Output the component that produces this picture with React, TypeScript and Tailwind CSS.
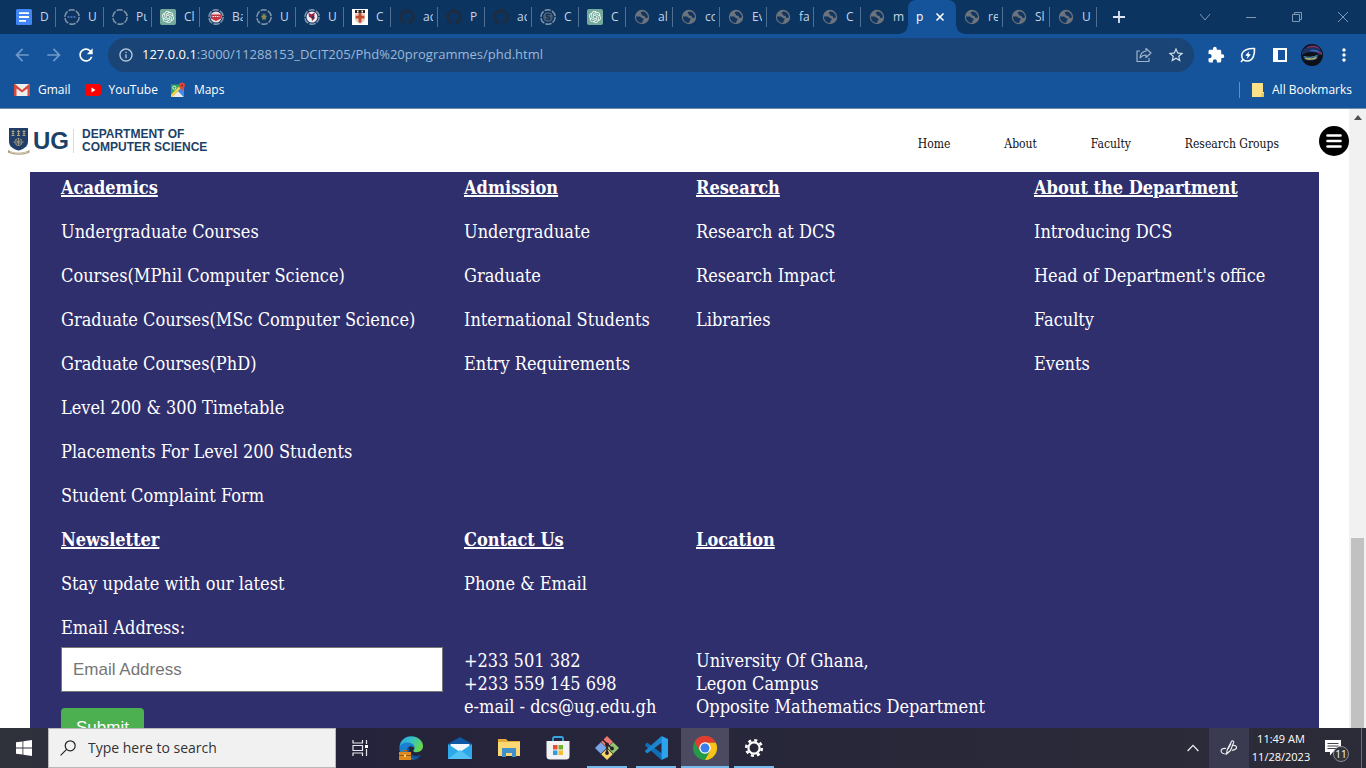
import React from "react";
import { FaGithub } from "react-icons/fa";
import { SiOpenai } from "react-icons/si";
import {
  MdArrowBack,
  MdArrowForward,
  MdExtension,
  MdInfoOutline,
  MdMoreVert,
  MdRefresh,
  MdStarBorder,
} from "react-icons/md";

const UI_FONT = "font-['Open_Sans','Noto_Sans',sans-serif]";
const PAGE_FONT = "font-['DejaVu_Serif_Condensed','DejaVu_Serif',serif]";

type TabIcon = "docs" | "ringDots" | "ring" | "ai" | "ringRed" | "ringGold" | "ringBird" | "crest" | "github" | "ringS" | "globe";

const TABS: { icon: TabIcon; label: string }[] = [
  { icon: "docs", label: "D" },
  { icon: "ringDots", label: "U" },
  { icon: "ring", label: "Pu" },
  { icon: "ai", label: "Cl" },
  { icon: "ringRed", label: "Ba" },
  { icon: "ringGold", label: "U" },
  { icon: "ringBird", label: "U" },
  { icon: "crest", label: "C" },
  { icon: "github", label: "ac" },
  { icon: "github", label: "P" },
  { icon: "github", label: "ac" },
  { icon: "ringS", label: "C" },
  { icon: "ai", label: "C" },
  { icon: "globe", label: "al" },
  { icon: "globe", label: "co" },
  { icon: "globe", label: "Ev" },
  { icon: "globe", label: "fa" },
  { icon: "globe", label: "C" },
  { icon: "globe", label: "m" },
];

const TABS_AFTER: { icon: TabIcon; label: string }[] = [
  { icon: "globe", label: "re" },
  { icon: "globe", label: "Sl" },
  { icon: "globe", label: "U" },
];

function Ring({ children }: { children?: React.ReactNode }) {
  return (
    <svg viewBox="0 0 16 16" className="size-4 shrink-0">
      <circle cx="8" cy="8" r="7.2" fill="none" stroke="#8195ab" strokeWidth="1.5" strokeDasharray="6.3 1.24" />
      {children}
    </svg>
  );
}

function Favicon({ icon }: { icon: TabIcon }) {
  switch (icon) {
    case "docs":
      return (
        <svg viewBox="0 0 16 16" className="size-4 shrink-0">
          <rect width="16" height="16" rx="1.5" fill="#4285f4" />
          <path d="M3 4.2h10M3 8h10M3 11.8h7" stroke="#fff" strokeWidth="1.8" />
        </svg>
      );
    case "ai":
      return (
        <span className="flex size-4 shrink-0 items-center justify-center rounded-xs bg-[#74aa9c]">
          <SiOpenai className="size-3 text-white" />
        </span>
      );
    case "github":
      return <FaGithub className="size-4 shrink-0 text-[#1d2c41]" />;
    case "crest":
      return (
        <svg viewBox="0 0 16 16" className="size-4 shrink-0">
          <rect width="16" height="16" fill="#fff" />
          <path d="M3 1h10v3H3z" fill="#2b2324" />
          <path d="M5 1.5h1.5v2H5zM9.5 1.5H11v2H9.5z" fill="#fff" />
          <path d="M3.2 4.5h9.6v5.2c0 2.4-2.4 4.2-4.8 5.2-2.4-1-4.8-2.8-4.8-5.2z" fill="#e6c9bb" />
          <path d="M6.6 3.8h2.8v3h3v2.6h-3v4H6.600v-4h-3V6.800h3z" fill="#c14a2a" />
        </svg>
      );
    case "globe":
      return (
        <svg viewBox="0 0 16 16" className="size-4 shrink-0">
          <circle cx="8" cy="8" r="7.2" fill="#6b737c" />
          <path
            d="M2 7.500h3.500c1.600 0 1.600 1.700 2.900 1.700 1.500 0 1.600 1 .9 1.900-.8 1-1 1.600-1.100 2.900C4.500 14.200 1.700 11 2 7.500zM8.300 2.400c-1.700.3-2 1.800-1 2.400 1 .5.300 1.900 1.900 2 1.200.1 1.500.2 1.700 1.200.2 1.100 1.800 1.200 3 .5.300-3-2.400-6.300-5.600-6.100z"
            fill="#12365f"
          />
        </svg>
      );
    case "ringDots":
      return (
        <Ring>
          <path d="M3.5 8h9" stroke="#4468a8" strokeWidth="2" strokeDasharray="2 1" />
        </Ring>
      );
    case "ringRed":
      return (
        <Ring>
          <circle cx="8" cy="8" r="5.6" fill="#e8dfe3" />
          <path d="M3 5.5h10v4L8 12 3 9.5z" fill="#c63440" />
          <path d="M4.5 7.5h7" stroke="#fff" strokeWidth="1.2" strokeDasharray="1.5 .7" />
        </Ring>
      );
    case "ringGold":
      return (
        <Ring>
          <path d="M5.5 4.5h5v5L8 12 5.5 9.5z" fill="#2d4c62" />
          <path d="M8 4l1 2.500 2 .5-1.500 1.500L10 11l-2-1.200L6 11l.5-2.500L5 7l2-.5z" fill="#8f8b4b" />
        </Ring>
      );
    case "ringBird":
      return (
        <Ring>
          <circle cx="8" cy="8" r="5.5" fill="#f1eef2" />
          <path d="M4.500 4l3 1.200L11 3.500l-1 3.500 1 2-3 3-.5-3-2.500-1z" fill="#9e2442" />
          <path d="M7 8l3.500-2-1.500 4.500z" fill="#23375f" />
        </Ring>
      );
    case "ringS":
      return (
        <Ring>
          <circle cx="8" cy="8" r="4.8" fill="#4a6079" />
          <path d="M10 6c-.6-1-3.7-1-3.7.5 0 1.800 3.600.8 3.600 2.700 0 1.500-3.200 1.500-3.900.3" fill="none" stroke="#0c2b50" strokeWidth="1.3" />
        </Ring>
      );
    default:
      return <Ring />;
  }
}

function Tab({ icon, label, wide, last }: { icon: TabIcon; label: string; wide?: boolean; last?: boolean }) {
  return (
    <button
      type="button"
      className={`flex h-5 shrink-0 items-center gap-2 pr-1 pl-2 ${wide ? "w-12" : "w-[47px]"} ${
        last ? "" : "border-r border-[#4f6f94]"
      }`}
    >
      <Favicon icon={icon} />
      <span className="w-2 flex-1 overflow-hidden text-left text-xs whitespace-nowrap text-[#c5d5e8]">{label}</span>
    </button>
  );
}

function TabStrip() {
  return (
    <div className="flex h-[34px] shrink-0 items-center bg-[#0c3461] pl-2 text-white">
      {TABS.map((t, i) => (
        <Tab key={i} icon={t.icon} label={t.label} wide={i < 7} last={i === TABS.length - 1} />
      ))}
      <div className="relative flex h-[34px] w-12 shrink-0 items-center gap-3 rounded-t-lg bg-[#15539b] pl-2 text-xs">
        <span className="absolute bottom-0 -left-2 size-2 bg-[radial-gradient(circle_at_0_0,transparent_7px,#15539b_8px)]" />
        <span className="absolute -right-2 bottom-0 size-2 bg-[radial-gradient(circle_at_100%_0,transparent_7px,#15539b_8px)]" />
        <span>p</span>
        <button type="button" aria-label="Close tab">
          <svg viewBox="0 0 10 10" className="size-2.5">
            <path d="M1.500 1.500l7 7M8.500 1.500l-7 7" stroke="#fff" strokeWidth="1.600" />
          </svg>
        </button>
      </div>
      {TABS_AFTER.map((t, i) => (
        <Tab key={i} icon={t.icon} label={t.label} />
      ))}
      <button type="button" aria-label="New tab" className="ml-4">
        <svg viewBox="0 0 12 12" className="size-3">
          <path d="M6 0v12M0 6h12" stroke="#dce7f3" strokeWidth="1.800" />
        </svg>
      </button>
      <div className="ml-auto flex h-7 items-center text-[#7f98b6]">
        <button type="button" aria-label="Search tabs" className="flex w-[46px] justify-center">
          <svg viewBox="0 0 12 12" className="size-3" fill="none" stroke="currentColor">
            <path d="M1 3l5 6 5-6" />
          </svg>
        </button>
        <button type="button" aria-label="Minimize" className="flex w-[46px] justify-center">
          <svg viewBox="0 0 12 12" className="size-3" fill="none" stroke="currentColor">
            <path d="M1 6.500h10" />
          </svg>
        </button>
        <button type="button" aria-label="Restore" className="flex w-[46px] justify-center">
          <svg viewBox="0 0 12 12" className="size-3" fill="none" stroke="currentColor">
            <path d="M1.500 3.500h7v7h-7zM3.500 3.500v-2h7v7h-2" />
          </svg>
        </button>
        <button type="button" aria-label="Close window" className="flex w-[46px] justify-center">
          <svg viewBox="0 0 12 12" className="size-3" fill="none" stroke="currentColor">
            <path d="M1 1l10 10M11 1L1 11" />
          </svg>
        </button>
      </div>
    </div>
  );
}

function ToolButton({ label, children }: { label: string; children: React.ReactNode }) {
  return (
    <button type="button" aria-label={label} className="flex w-8 shrink-0 items-center justify-center">
      {children}
    </button>
  );
}

function Toolbar() {
  return (
    <div className="flex h-[42px] shrink-0 items-center bg-[#15539b] px-1.5 text-white">
      <ToolButton label="Back">
        <MdArrowBack className="size-5 text-[#6f9aca]" />
      </ToolButton>
      <ToolButton label="Forward">
        <MdArrowForward className="size-5 text-[#6f9aca]" />
      </ToolButton>
      <ToolButton label="Reload">
        <MdRefresh className="size-5" />
      </ToolButton>
      <div className="mx-1.5 flex h-[34px] flex-1 items-center rounded-full bg-[#194475] pr-0.5 pl-2.5">
        <MdInfoOutline className="size-4 text-[#b7c8dc]" />
        <p className="ml-2 text-[13px] text-[#9db8d8]">
          <span className="text-white">127.0.0.1</span>:3000/11288153_DCIT205/Phd%20programmes/phd.html
        </p>
        <div className="ml-auto flex">
          <ToolButton label="Share this page">
            <svg viewBox="0 0 16 16" className="size-4" fill="none" stroke="#9fb4cc" strokeWidth="1.200" strokeLinejoin="round">
              <path d="M4 4H1v10.500h12V11" />
              <path d="M10 1.500l5 4.500-5 4.500V8C7.500 8 5.500 9 4 11c.3-3.500 2.500-6.500 6-7z" />
            </svg>
          </ToolButton>
          <ToolButton label="Bookmark this page">
            <MdStarBorder className="size-[18px] text-[#d3deea]" />
          </ToolButton>
        </div>
      </div>
      <ToolButton label="Extensions">
        <MdExtension className="size-[18px]" />
      </ToolButton>
      <ToolButton label="Energy saver">
        <svg viewBox="0 0 16 16" className="size-4" fill="none" stroke="#fff" strokeWidth="1.600" strokeLinejoin="round">
          <path d="M14.500 1.500C9 1.200 2 2.500 1.700 8.500c0 3.500 2.500 5.500 5.500 5.500 6 0 7.600-7 7.300-12.500z" />
          <path d="M3.500 12L1 15" />
          <path d="M9.300 4.200L5.200 8.600l2.400.4-.8 2.900 4.100-4.400-2.400-.4z" fill="#fff" stroke="none" />
        </svg>
      </ToolButton>
      <ToolButton label="Side panel">
        <svg viewBox="0 0 14 14" className="size-3.5">
          <path d="M0 0h14v14H0z" fill="#fff" />
          <path d="M5 2h7v10H5z" fill="#15539b" />
        </svg>
      </ToolButton>
      <ToolButton label="Profile">
        <svg viewBox="0 0 22 22" className="size-[22px]">
          <circle cx="11" cy="11" r="11" fill="#0d1018" />
          <path d="M1 8C4 2 12 0 18 3l3 6-2 2C14 7 7 7 1 11z" fill="#1c3263" />
          <path d="M6 3c4-2 8-1.500 11 0l2 2c-4-2-8-2.500-13-1z" fill="#8c2b52" />
          <path d="M10 6c4-1 8 .5 11 4-4-2-8-3-13-2.500z" fill="#3a68c0" />
          <path d="M15 7l6 2v2z" fill="#a92a55" />
          <path d="M2 12c5 2 11 1 16-2l-2 5c-4 2-10 2-13 0z" fill="#25456e" />
          <path d="M4 13.500c4 1.500 8 1 12-1l-1 2c-3 1.500-8 1.500-10.500.5z" fill="#cbb968" />
          <path d="M3 12.500c4 1.200 9 1 13-1" stroke="#46a6b5" strokeWidth=".8" fill="none" />
        </svg>
      </ToolButton>
      <ToolButton label="Menu">
        <MdMoreVert className="size-5" />
      </ToolButton>
    </div>
  );
}

function BookmarksBar() {
  return (
    <nav className="flex h-[33px] shrink-0 items-center border-b border-[#6f8cac] bg-[#15539b] pr-3.5 pb-1 pl-3.5 text-xs text-white">
      <a href="#gmail" className="flex items-center gap-2">
        <svg viewBox="0 0 16 12" className="h-3 w-4">
          <path d="M1 0h14v12H1z" fill="#eee" />
          <path d="M1 0l7 6 7-6h1v12h-2.500V4.500L8 8.500l-5.500-4V12H0V0z" fill="#d54b3d" />
        </svg>
        Gmail
      </a>
      <a href="#youtube" className="ml-3.5 flex items-center gap-2">
        <svg viewBox="0 0 16 12" className="h-3 w-4">
          <rect width="16" height="12" rx="3" fill="#f00" />
          <path d="M6.500 3.500v5l4-2.500z" fill="#fff" />
        </svg>
        YouTube
      </a>
      <a href="#maps" className="ml-3 flex items-center gap-2">
        <svg viewBox="0 0 16 16" className="size-4">
          <path d="M1 2.500h11V15H1z" fill="#35a35a" />
          <path d="M2 15l6-6 6 6z" fill="#e8eaed" />
          <path d="M8 9l6 6V6l-3-1z" fill="#4a87ed" />
          <path d="M1 12.500L9 4.500l1.500 2L2.500 15H1z" fill="#f6d04b" />
          <circle cx="4.300" cy="5.700" r="1.600" fill="none" stroke="#fff" strokeWidth=".8" />
          <path d="M12 .5a3 3 0 013 3c0 2-2.300 3-3 6-.7-3-3-4-3-6a3 3 0 013-3z" fill="#e0463b" />
          <circle cx="12" cy="3.500" r="1" fill="#812a26" />
        </svg>
        Maps
      </a>
      <span className="ml-auto h-4 w-px bg-[#5f8ec2]" />
      <a href="#bookmarks" className="ml-3 flex items-center gap-2">
        <svg viewBox="0 0 12 14" className="h-3.5 w-3">
          <path d="M0 0h11v9h1v5H0z" fill="#fbe08a" />
          <path d="M10 10h2v4h-3z" fill="#e9c452" />
        </svg>
        All Bookmarks
      </a>
    </nav>
  );
}

function SiteHeader() {
  return (
    <header className="flex h-[63px] items-center pl-2">
      <a href="#top" aria-label="UG Department of Computer Science" className="flex items-center text-[#1c4168]">
        <svg viewBox="0 0 22 28" className="h-7 w-[22px]">
          <path d="M1 1h19v13.500c0 5-4 7.500-9.500 9C5 22 1 19.500 1 14.500z" fill="#213e68" />
          <path d="M5 3v5M10.500 3v5M16 3v5M3.500 4.500h3M9 4.500h3M14.500 4.500h3M3.500 8.500h3M9 8.500h3M14.500 8.500h3" stroke="#a9a183" />
          <path d="M4 6.500h2M9.500 6.500h2M15 6.500h2" stroke="#a9a183" />
          <circle cx="10.500" cy="15" r="3.500" fill="none" stroke="#a9a183" strokeDasharray="2 1" />
          <path d="M10.500 11v8M5.500 15h10M7.500 12l6 6M13.500 12l-6 6" stroke="#a9a183" strokeWidth=".8" />
          <path d="M0 23c6 3.500 15 3.500 21.500 0v2.500c-6.500 3-15 3-21.500 0z" fill="#ad9b7d" />
          <path d="M2 24.800c6 2 12 2 17.500 0" stroke="#e9e2d2" strokeWidth=".8" fill="none" />
        </svg>
        <span className="ml-[3px] font-['Liberation_Sans',sans-serif] text-2xl leading-6 font-bold">UG</span>
        <span className="ml-1 h-6 w-px bg-[#d7dade]" />
        <span className="ml-2 font-['Liberation_Sans',sans-serif] text-xs leading-[13px] font-bold">
          DEPARTMENT OF
          <br />
          COMPUTER SCIENCE
        </span>
      </a>
      <nav className="ml-auto flex items-center gap-[54px] pt-1.5 text-xs text-[#111]">
        <a href="#home">Home</a>
        <a href="#about">About</a>
        <a href="#faculty">Faculty</a>
        <a href="#research">Research Groups</a>
      </nav>
      <button type="button" aria-label="Open menu" className="ml-10 flex size-[30px] items-center justify-center rounded-full bg-black">
        <svg viewBox="0 0 16 14" className="h-3.5 w-4">
          <path d="M1.500 1.500h13M1.500 7h13M1.500 12.500h13" stroke="#fff" strokeWidth="2.600" strokeLinecap="round" />
        </svg>
      </button>
    </header>
  );
}

const COLUMNS = [
  {
    title: "Academics",
    links: [
      "Undergraduate Courses",
      "Courses(MPhil Computer Science)",
      "Graduate Courses(MSc Computer Science)",
      "Graduate Courses(PhD)",
      "Level 200 & 300 Timetable",
      "Placements For Level 200 Students",
      "Student Complaint Form",
    ],
  },
  { title: "Admission", links: ["Undergraduate", "Graduate", "International Students", "Entry Requirements"] },
  { title: "Research", links: ["Research at DCS", "Research Impact", "Libraries"] },
  { title: "About the Department", links: ["Introducing DCS", "Head of Department's office", "Faculty", "Events"] },
];

function Heading({ children }: { children: React.ReactNode }) {
  return <h2 className="font-bold underline decoration-2">{children}</h2>;
}

function SiteFooter() {
  return (
    <footer className="mx-[30px] mr-[30px] grid grid-cols-[403fr_232fr_338fr_285fr] gap-y-5 bg-[#302f6e] pt-1 pb-10 pl-[31px] text-lg leading-6 whitespace-nowrap text-white">
      {COLUMNS.map((c) => (
        <section key={c.title} className="flex flex-col items-start gap-5">
          <Heading>{c.title}</Heading>
          {c.links.map((l) => (
            <a key={l} href="#page">
              {l}
            </a>
          ))}
        </section>
      ))}
      <section className="flex flex-col items-start gap-5">
        <Heading>Newsletter</Heading>
        <p>Stay update with our latest</p>
        <form className="flex w-full flex-col items-start">
          <label htmlFor="email">Email Address:</label>
          <input
            id="email"
            type="email"
            placeholder="Email Address"
            className="mt-[7px] h-[45px] w-[382px] border border-[#767676] bg-white px-[11px] font-['Liberation_Sans',sans-serif] text-[17px] text-black placeholder:text-[#757575]"
          />
          <button type="button" className="mt-4 h-10 rounded-sm bg-[#4caf50] px-[15px] font-['Liberation_Sans',sans-serif] text-[17px]">
            Submit
          </button>
        </form>
      </section>
      <section className="flex flex-col items-start gap-5">
        <Heading>Contact Us</Heading>
        <p>Phone &amp; Email</p>
        <address className="pt-[33px] leading-[23px] not-italic">
          +233 501 382
          <br />
          +233 559 145 698
          <br />
          e-mail - dcs@ug.edu.gh
        </address>
      </section>
      <section className="flex flex-col items-start gap-[97px]">
        <Heading>Location</Heading>
        <address className="leading-[23px] not-italic">
          University Of Ghana,
          <br />
          Legon Campus
          <br />
          Opposite Mathematics Department
        </address>
      </section>
    </footer>
  );
}

function TaskButton({ label, open, active, children }: { label: string; open?: boolean; active?: boolean; children: React.ReactNode }) {
  return (
    <button
      type="button"
      aria-label={label}
      className={`flex h-10 w-12 flex-col items-center ${active ? "bg-[#4b4a61]" : ""}`}
    >
      <span className="flex flex-1 items-center">{children}</span>
      {open && <span className={`-mt-0.5 h-0.5 bg-[#76b9ed] ${active ? "w-12" : "w-10"}`} />}
    </button>
  );
}

function Taskbar() {
  return (
    <div className="flex h-10 shrink-0 bg-linear-to-r from-[#30323b] via-[#24233b] via-25% to-[#2c2c38] text-white">
      <button type="button" aria-label="Start" className="flex w-12 items-center justify-center">
        <svg viewBox="0 0 16 16" className="size-4">
          <path d="M0 2.300L6.500 1.400V7.600H0zM7.300 1.300L16 0V7.600H7.300zM0 8.400h6.500v6.200L0 13.700zM7.300 8.400H16V16l-8.700-1.300z" fill="#fff" />
        </svg>
      </button>
      <label className="flex w-72 items-center gap-3 border border-[#b8b8b8] bg-[#f1f1f1] px-[11px] text-[#222]">
        <svg viewBox="0 0 16 16" className="size-4 shrink-0" fill="none" stroke="#222" strokeWidth="1.200">
          <circle cx="10.200" cy="5.800" r="5" />
          <path d="M6.600 9.400L.6 15.400" />
        </svg>
        <input
          type="text"
          aria-label="Search"
          placeholder="Type here to search"
          className="w-full bg-transparent text-sm outline-none placeholder:text-[#333]"
        />
      </label>
      <div className="flex gap-px pl-0.5">
        <TaskButton label="Task view">
          <svg viewBox="0 0 18 18" className="-ml-1 size-[18px]" fill="none" stroke="#e8e8ee" strokeWidth="1.200">
            <path d="M2 1v3h9.500V1M2 6.500h9.500v5H2zM2 17v-3h9.500v3M15.500 1v4M15.500 10v7" />
            <path d="M14 6h3v3h-3z" fill="#fff" stroke="none" />
          </svg>
        </TaskButton>
        <TaskButton label="Edge">
          <svg viewBox="0 0 24 24" className="size-6">
            <defs>
              <linearGradient id="edgeTop" x1="0" y1="0" x2="1" y2=".4">
                <stop offset="0" stopColor="#2a9fe0" />
                <stop offset=".5" stopColor="#35c1cb" />
                <stop offset="1" stopColor="#62d651" />
              </linearGradient>
            </defs>
            <path d="M.5 11C1 4.500 6 .3 12 .3c7 0 12 4.700 12 9.700 0 4-3 6.200-6.500 6.200-3 0-3.700-1.400-2.700-2.500 2-2.200-.3-6-5-6-5 0-8 2-9.300 3.300z" fill="url(#edgeTop)" />
            <path d="M.3 12.500C.5 9 4 6.500 8.500 6.500c4.700 0 7.500 3 6.800 6-.5-1.300-1.800-2.300-3.300-2.300-4 0-5 5-2 9 2 2.700 6 4 9.500 2.800C13 26 .5 22 .3 12.500z" fill="#1a7fd0" />
            <path d="M10.500 11c-3 1.500-3.500 5-.8 8.500s8.300 4 11.800.5c.5-.6-.3-1.200-1-.8-3.500 1.500-8 .5-9.700-2.700-1.100-2.200-.8-4.200-.3-5.500z" fill="#0d54a0" />
            <path d="M0 16h12v8H0z" fill="#e08a1c" />
            <path d="M4 16v-1.500h4V16" stroke="#b8690f" fill="none" />
            <path d="M0 19h12v1H0z" fill="#9c560e" />
            <path d="M5 18.500h2v2.500H5z" fill="#ffd675" />
          </svg>
        </TaskButton>
        <TaskButton label="Mail">
          <svg viewBox="0 0 24 22" className="h-[22px] w-6">
            <path d="M0 7l12-7 12 7v4H0z" fill="#0e59a6" />
            <path d="M2.500 7h19v6l-9.500 6-9.500-6z" fill="#f2f8fd" />
            <path d="M0 7l12 8 12-8v15H0z" fill="#2da8e9" />
            <path d="M0 22l12-9 12 9z" fill="#52c1f3" />
          </svg>
        </TaskButton>
        <TaskButton label="File Explorer">
          <svg viewBox="0 0 22 20" className="h-5 w-[22px]">
            <path d="M0 1h8l2 2h12v15H0z" fill="#e5a93a" />
            <path d="M0 4h22v14H0z" fill="#fbd874" />
            <path d="M4 10h14v9h-4v-4H8v4H4z" fill="#3f90cb" />
          </svg>
        </TaskButton>
        <TaskButton label="Store">
          <svg viewBox="0 0 24 24" className="size-6">
            <path d="M7 6V2.500Q7 1 8.500 1h7Q17 1 17 2.500V6" fill="none" stroke="#35a7e3" strokeWidth="1.800" />
            <path d="M.5 5h23v15a3.500 3.500 0 01-3.500 3.500H4A3.500 3.500 0 01.500 20z" fill="#f2f2f4" />
            <path d="M7 9h4.500v4.500H7z" fill="#e84f2d" />
            <path d="M12.500 9H17v4.500h-4.500z" fill="#72b02f" />
            <path d="M7 14.500h4.500V19H7z" fill="#2a9fdc" />
            <path d="M12.500 14.500H17V19h-4.500z" fill="#f5ba2f" />
          </svg>
        </TaskButton>
        <TaskButton label="Git" open>
          <svg viewBox="0 0 24 24" className="size-6">
            <path d="M12 0l6 6-6 6-6-6z" fill="#ef7771" />
            <path d="M5.800 6.200L11.600 12l-5.800 5.800L0 12z" fill="#77a5e6" />
            <path d="M18.200 6.200L24 12l-5.800 5.800L12.400 12z" fill="#91c570" />
            <path d="M12 12.400l5.800 5.800L12 24l-5.800-5.800z" fill="#f4d66b" />
            <path d="M7.500 3.500L12 8v9M12 8l5 4.500" stroke="#25202a" strokeWidth="1.600" fill="none" />
            <circle cx="12" cy="8.500" r="1.900" fill="#25202a" />
            <circle cx="12" cy="17" r="1.900" fill="#25202a" />
            <circle cx="17" cy="12.500" r="1.900" fill="#25202a" />
          </svg>
        </TaskButton>
        <TaskButton label="Visual Studio Code" open>
          <svg viewBox="0 0 24 24" className="size-6">
            <path d="M17.500 24L.8 9.200 3 6.500 18 17.500z" fill="#0f70b8" />
            <path d="M17.500 0L.8 15l2.200 2.600L18 6.500z" fill="#1b86cf" />
            <path d="M17.500 0L24 3v18l-6.500 3z" fill="#2aa2ee" />
          </svg>
        </TaskButton>
        <TaskButton label="Chrome" open active>
          <svg viewBox="0 0 24 24" className="size-6">
            <circle cx="12" cy="12" r="12" fill="#229a48" />
            <path d="M12 6.500h10.700A12 12 0 0112 24l5-9z" fill="#fbc116" />
            <path d="M1.600 6A12 12 0 0122.700 6.500H12L6.800 15z" fill="#e33b2e" />
            <circle cx="12" cy="12" r="5.800" fill="#fff" />
            <circle cx="12" cy="12" r="4.500" fill="#3b7de9" />
          </svg>
        </TaskButton>
        <TaskButton label="Settings" open>
          <svg viewBox="0 0 20 20" className="size-5" fill="none" stroke="#fff">
            <circle cx="10" cy="10" r="7.800" strokeWidth="2.600" strokeDasharray="3.060 3.060" />
            <circle cx="10" cy="10" r="5.600" strokeWidth="2.200" />
          </svg>
        </TaskButton>
      </div>
      <div className="ml-auto flex items-center">
        <button type="button" aria-label="Show hidden icons" className="flex w-8 justify-center">
          <svg viewBox="0 0 12 8" className="h-2 w-3" fill="none" stroke="#eee" strokeWidth="1.300">
            <path d="M.6 7L6 1.400 11.400 7" />
          </svg>
        </button>
        <button type="button" aria-label="Ink workspace" className="flex h-10 w-10 items-center justify-center bg-[#3a3a50]">
          <svg viewBox="0 0 18 18" className="size-[18px]" fill="none" stroke="#eee" strokeWidth="1.200" strokeLinejoin="round">
            <path d="M6.500 15l.8-4.500 4.200-8c.6-1.200 2.600-.4 2.200.9L10.500 11.500z" />
            <path d="M8 10l3-5.500" />
            <path d="M6 9.500C2.500 9 .8 10.500 1.200 12.500s3.300 2.500 5.300 2.500M12 6.500c3-.5 5 .5 4.500 2.500s-3 1.500-4.500 2.500" />
          </svg>
        </button>
        <div className="w-16 text-center text-[11px] leading-[18px]">
          11:49 AM
          <br />
          11/28/2023
        </div>
        <button type="button" aria-label="Notifications" className="relative ml-3 flex w-9 justify-start">
          <svg viewBox="0 0 16 16" className="size-4">
            <path d="M0 0h16v12H8l-3 3.500V12H0z" fill="#fff" />
            <path d="M2.500 3.500h11M2.500 6h11M2.500 8.500h11" stroke="#2c2c38" strokeWidth=".9" />
          </svg>
          <span className="absolute top-1.5 left-2 flex size-4 items-center justify-center rounded-full border border-[#8d8d96] bg-[#33333d] text-[10px] leading-none">
            11
          </span>
        </button>
        <span className="mr-1 h-10 w-px bg-[#6c6c76]" />
      </div>
    </div>
  );
}

export default function App() {
  return (
    <div className={`flex h-screen flex-col overflow-hidden ${UI_FONT}`}>
      <TabStrip />
      <Toolbar />
      <BookmarksBar />
      <div className="flex min-h-0 flex-1 bg-white">
        <main className={`min-w-0 flex-1 overflow-hidden ${PAGE_FONT}`}>
          <SiteHeader />
          <SiteFooter />
        </main>
        <div className="flex w-[17px] flex-col items-center bg-[#f1f1f1] pt-1.5">
          <svg viewBox="0 0 8 5" className="h-[5px] w-2">
            <path d="M0 5l4-5 4 5z" fill="#505050" />
          </svg>
          <div className="mt-auto h-[31%] w-[13px] bg-[#c1c1c1]" />
        </div>
      </div>
      <Taskbar />
    </div>
  );
}
